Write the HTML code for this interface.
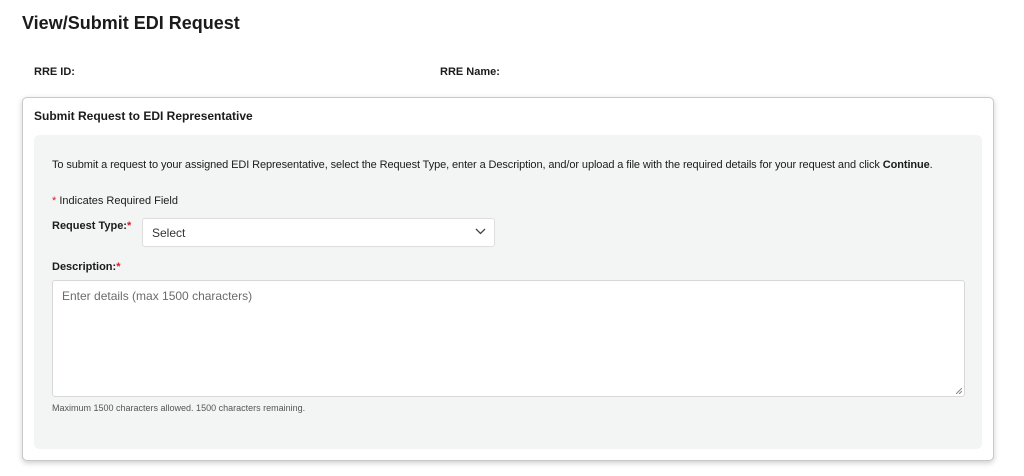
<!DOCTYPE html>
<html><head><style>
body{margin:0;width:1024px;height:476px;background:#fff;font-family:"Liberation Sans",sans-serif;color:#1b1b1b;position:relative;overflow:hidden}
.a{position:absolute;white-space:nowrap}
h1{position:absolute;left:22px;top:13px;margin:0;font-size:18px;font-weight:bold}
.card{position:absolute;left:22px;top:97px;width:970px;height:362px;border:1px solid #c9c9c9;border-radius:5px;box-shadow:0 2px 6px rgba(0,0,0,.2);background:#fff}
.panel{position:absolute;left:34px;top:135px;width:948px;height:314px;background:#f3f5f4;border-radius:5px}
.sel{position:absolute;left:142px;top:218px;width:351px;height:27px;background:#fff;border:1px solid #dedede;border-radius:3px}
.ta{position:absolute;left:52px;top:280px;width:911px;height:115px;background:#fff;border:1px solid #d8d8d8;border-radius:3px}
.r{color:#d9182a}
</style></head><body>
<h1>View/Submit EDI Request</h1>
<div class="a" style="left:34px;top:66px;font-size:11px;font-weight:bold">RRE ID:</div>
<div class="a" style="left:440px;top:66px;font-size:11px;font-weight:bold">RRE Name:</div>
<div class="card"></div>
<div class="a" style="left:34px;top:109px;font-size:12px;font-weight:bold">Submit Request to EDI Representative</div>
<div class="panel"></div>
<div class="a" style="left:52px;top:159px;font-size:11px;letter-spacing:-0.1px">To submit a request to your assigned EDI Representative, select the Request Type, enter a Description, and/or upload a file with the required details for your request and click <b>Continue</b>.</div>
<div class="a" style="left:52px;top:195px;font-size:11px"><span class="r">*</span> Indicates Required Field</div>
<div class="a" style="left:52px;top:220px;font-size:11px;font-weight:bold">Request Type:<span class="r">*</span></div>
<div class="sel"><span class="a" style="left:9px;top:7px;font-size:12px;color:#333">Select</span>
<svg class="a" style="left:332px;top:9px" width="11" height="7" viewBox="0 0 11 7"><path d="M1 1l4.5 4.5L10 1" fill="none" stroke="#444" stroke-width="1.3"/></svg></div>
<div class="a" style="left:52px;top:261px;font-size:11px;font-weight:bold">Description:<span class="r">*</span></div>
<div class="ta"><span class="a" style="left:9px;top:8px;font-size:12px;color:#6b6b6b">Enter details (max 1500 characters)</span>
<svg class="a" style="left:903px;top:107px" width="6" height="6"><path d="M0 6L6 0M3 6L6 3" stroke="#888" stroke-width="1"/></svg></div>
<div class="a" style="left:52px;top:403px;font-size:9px;color:#555">Maximum 1500 characters allowed. 1500 characters remaining.</div>
</body></html>
